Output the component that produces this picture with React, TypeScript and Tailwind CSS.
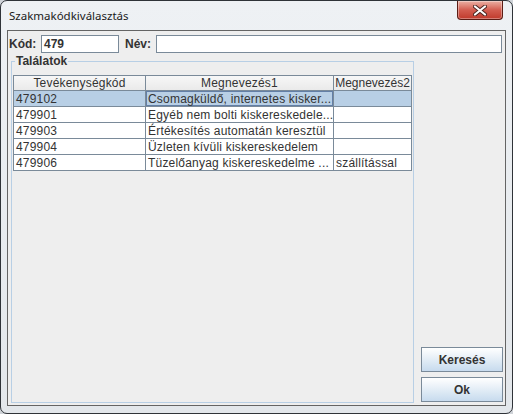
import React from 'react';

const rows = [
    { kod: '479102', m1: 'Csomagküldő, internetes kisker...', m2: '', selected: true },
    { kod: '479901', m1: 'Egyéb nem bolti kiskereskedele...', m2: '' },
    { kod: '479903', m1: 'Értékesítés automatán keresztül', m2: '' },
    { kod: '479904', m1: 'Üzleten kívüli kiskereskedelem', m2: '' },
    { kod: '479906', m1: 'Tüzelőanyag kiskereskedelme ...', m2: 'szállítással' },
];

const dialogFont = { fontFamily: '"Liberation Sans", Arial, sans-serif' };

function CloseButton() {
    return (
        <div className="w-[46px] h-[19px] rounded-b-[4px] border border-t-0 border-[#5b1d15] bg-gradient-to-b from-[#eab0a4] via-[#d35d50] to-[#c0392b] flex items-center justify-center shadow-[inset_0_0_0_1px_rgba(255,255,255,0.35)]">
            <svg width="14" height="11" viewBox="0 0 14 11">
                <path d="M2 1.5 L12 9.5 M12 1.5 L2 9.5" stroke="#4a2520" strokeWidth="4" strokeLinecap="round" />
                <path d="M2 1.5 L12 9.5 M12 1.5 L2 9.5" stroke="#ffffff" strokeWidth="2.2" strokeLinecap="round" />
            </svg>
        </div>
    );
}

function TextField({ value, className }: { value: string; className: string }) {
    return (
        <div className={`h-[18px] border border-[#7a8a99] bg-white flex items-center px-[2px] text-[12px] font-bold text-[#333333] ${className}`}>
            {value}
        </div>
    );
}

function Button({ label }: { label: string }) {
    return (
        <div className="h-[25px] w-[82px] border border-[#7a8a99] bg-gradient-to-b from-[#ffffff] via-[#e3edf6] to-[#c7dbee] flex items-center justify-center text-[12px] font-bold text-[#333333]">
            {label}
        </div>
    );
}

function ResultTable() {
    return (
        <div className="ml-[1px] mt-[7px] w-[399px] border-l border-[#7a8a99] text-[12px] text-[#333333] tracking-[0.2px]">
            <div className="flex h-[16px] border-t border-[#7a8a99] bg-gradient-to-b from-[#f7f7f7] to-[#e9e9e9]">
                <div className="w-[132px] border-r border-b border-[#7a8a99] flex items-center justify-center leading-none">Tevékenységkód</div>
                <div className="w-[188px] border-r border-b border-[#7a8a99] flex items-center justify-center leading-none">Megnevezés1</div>
                <div className="w-[78px] border-r border-b border-[#7a8a99] flex items-center justify-center leading-none whitespace-nowrap overflow-hidden tracking-normal">Megnevezés2</div>
            </div>
            {rows.map((r) => (
                <div key={r.kod} className={`flex h-[16px] ${r.selected ? 'bg-[#b8cfe5]' : 'bg-white'}`}>
                    <div className="w-[132px] border-r border-b border-[#7a8a99] flex items-center pl-[2px] leading-none">{r.kod}</div>
                    <div className={`w-[188px] border-r border-b border-[#7a8a99] flex items-center pl-[2px] leading-none whitespace-nowrap overflow-hidden ${r.selected ? 'shadow-[inset_0_0_0_1px_#637fa6]' : ''}`}>
                        {r.m1}
                    </div>
                    <div className="w-[78px] border-r border-b border-[#7a8a99] flex items-center pl-[2px] leading-none whitespace-nowrap overflow-hidden">{r.m2}</div>
                </div>
            ))}
        </div>
    );
}

export default function App() {
    return (
        <div className="w-[513px] h-[414px] bg-[#cfd3d8] overflow-hidden">
            <div className="w-[513px] h-[414px] flex flex-col rounded-[7px] border border-[#2f3338] bg-gradient-to-b from-[#eef1f4] to-[#e3e7eb]">
                {/* Title bar */}
                <div className="h-[29px] flex items-start justify-between shrink-0">
                    <div className="pl-[8px] pt-[6px] text-[11.5px] text-[#1a1a1a]" style={{ fontFamily: '"Noto Sans", "Open Sans", sans-serif' }}>
                        Szakmakódkiválasztás
                    </div>
                    <div className="mr-[9px]">
                        <CloseButton />
                    </div>
                </div>

                {/* Content */}
                <div className="mx-[6px] h-[376px] border border-[#646464] bg-[#eeeeee] flex flex-col" style={dialogFont}>
                    <div className="flex items-center mt-[4px] h-[18px]">
                        <span className="ml-[1px] w-[32px] text-[12px] font-bold text-[#333333]">Kód:</span>
                        <TextField value="479" className="w-[78px]" />
                        <span className="ml-[6px] w-[31px] text-[12px] font-bold text-[#333333]">Név:</span>
                        <TextField value="" className="w-[346px]" />
                    </div>

                    <div className="flex flex-1 mt-[1px] pb-[2px]">
                        <fieldset className="ml-[3px] w-[403px] border border-[#b8cfe5] px-0">
                            <legend className="ml-[3px] px-[1px] text-[12px] font-bold text-[#333333] leading-[14px]">Találatok</legend>
                            <ResultTable />
                        </fieldset>
                        <div className="ml-[7px] flex flex-col justify-end gap-[5px] pb-[1px]">
                            <Button label="Keresés" />
                            <Button label="Ok" />
                        </div>
                    </div>
                </div>
            </div>
        </div>
    );
}
